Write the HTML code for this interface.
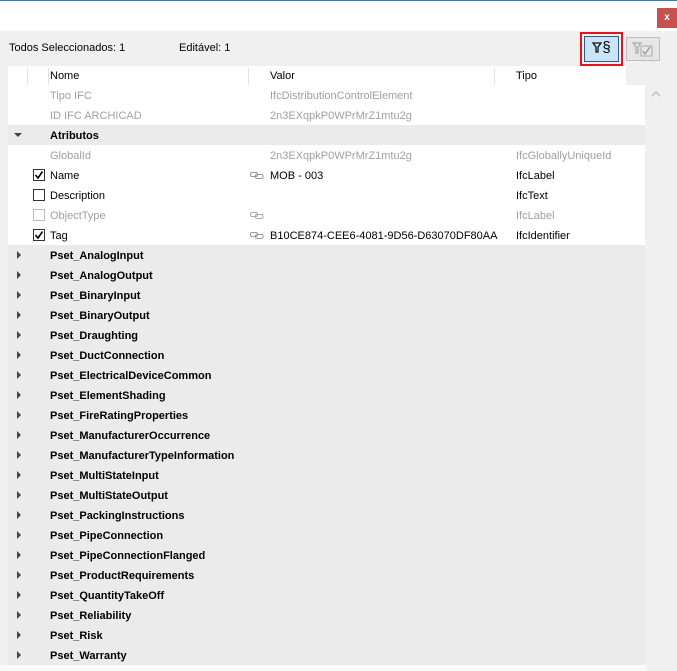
<!DOCTYPE html>
<html><head><meta charset="utf-8"><style>
*{margin:0;padding:0;box-sizing:border-box}
body{width:677px;height:671px;background:#f0f0f0;font-family:"Liberation Sans",sans-serif;font-size:11px;color:#000;position:relative;overflow:hidden}
.a{position:absolute;white-space:nowrap}
.row{position:absolute;left:8px;width:637px;height:20px}
.row span{position:absolute;top:5px;white-space:nowrap}
.g{color:#a0a0a0}
.b{font-weight:bold}
.cb{position:absolute;left:25px;top:4px;width:12px;height:12px;border:1px solid #333;background:#fff}
.cb.d{border-color:#bbb}
.tri{position:absolute;left:9px;top:6px;width:0;height:0}
.r{border-top:4px solid transparent;border-bottom:4px solid transparent;border-left:4px solid #444}
.dn{border-left:4px solid transparent;border-right:4px solid transparent;border-top:4px solid #444;top:8px;left:6px}
.lk{position:absolute;left:242px;top:7px}
</style></head><body>
<div class="a" style="left:0;top:0;width:677px;height:31px;background:#fff;border-top:1px solid #2b7cd3"></div>
<div class="a" style="left:657px;top:8px;width:20px;height:20px;background:#c75050;color:#fff;font-size:10px;font-weight:bold;text-align:center;line-height:19px">x</div>
<div class="a" style="left:9px;top:42px">Todos Seleccionados: 1</div>
<div class="a" style="left:179px;top:42px">Editável: 1</div>
<div class="a" style="left:580px;top:32px;width:43px;height:34px;border:2px solid #e8141a"></div>
<div class="a" style="left:584px;top:36px;width:35px;height:26px;background:#cce4f7;border:1px solid #2a5c8c;font-size:15px;line-height:22px;text-align:center">
<svg width="10" height="11" viewBox="0 0 10 11" style="vertical-align:-1px"><path d="M1 1h8L6 5v5H4V5z" fill="none" stroke="#111" stroke-width="1.3"/></svg>§</div>
<div class="a" style="left:626px;top:37px;width:34px;height:24px;border:1px solid #bdbdbd;background:#e6e6e6">
<svg width="32" height="22" viewBox="0 0 32 22"><path d="M6 5h8L11 9v6H9V9z" fill="none" stroke="#aaa" stroke-width="1.2"/><rect x="14" y="8" width="11" height="10" fill="none" stroke="#aaa"/><path d="M16 13l2 3 5-7" fill="none" stroke="#999" stroke-width="1.3"/></svg></div>
<div class="a" style="left:8px;top:66px;width:618px;height:19px;background:#fff"></div>
<div class="a" style="left:27px;top:68px;width:1px;height:17px;background:#e3e3e3"></div>
<div class="a" style="left:48px;top:68px;width:1px;height:17px;background:#e3e3e3"></div>
<div class="a" style="left:248px;top:68px;width:1px;height:17px;background:#e3e3e3"></div>
<div class="a" style="left:494px;top:68px;width:1px;height:17px;background:#e3e3e3"></div>
<div class="a" style="left:50px;top:70px">Nome</div>
<div class="a" style="left:270px;top:70px">Valor</div>
<div class="a" style="left:516px;top:70px">Tipo</div>
<svg class="a" style="left:651px;top:90px" width="10" height="7" viewBox="0 0 10 7"><path d="M1 6l4-4 4 4" fill="none" stroke="#c0c0c0" stroke-width="1.5"/></svg>
<div class="row" style="top:85px;background:#fff"><span class="g" style="left:42px">Tipo IFC</span><span class="g" style="left:262px">IfcDistributionControlElement</span></div>
<div class="row" style="top:105px;background:#fff"><span class="g" style="left:42px">ID IFC ARCHICAD</span><span class="g" style="left:262px">2n3EXqpkP0WPrMrZ1mtu2g</span></div>
<div class="row b" style="top:125px;background:#ebebeb"><div class="tri dn"></div><span style="left:42px">Atributos</span></div>
<div class="row" style="top:145px;background:#fff"><span class="g" style="left:42px">GlobalId</span><span class="g" style="left:262px">2n3EXqpkP0WPrMrZ1mtu2g</span><span class="g" style="left:508px">IfcGloballyUniqueId</span></div>
<div class="row" style="top:165px;background:#fff"><div class="cb"><svg width="10" height="10" viewBox="0 0 10 10"><path d="M1.5 5l2.5 3 4.5-6.5" fill="none" stroke="#000" stroke-width="1.6"/></svg></div><span style="left:42px">Name</span><svg class="lk" width="14" height="7" viewBox="0 0 14 7"><rect x="0.5" y="0.5" width="7" height="4" rx="1.5" fill="none" stroke="#999"/><rect x="5.5" y="2.5" width="7.5" height="4" rx="1.5" fill="none" stroke="#999"/></svg><span style="left:262px">MOB - 003</span><span style="left:508px">IfcLabel</span></div>
<div class="row" style="top:185px;background:#fff"><div class="cb"></div><span style="left:42px">Description</span><span style="left:508px">IfcText</span></div>
<div class="row" style="top:205px;background:#fff"><div class="cb d"></div><span class="g" style="left:42px">ObjectType</span><svg class="lk" width="14" height="7" viewBox="0 0 14 7"><rect x="0.5" y="0.5" width="7" height="4" rx="1.5" fill="none" stroke="#aaa"/><rect x="5.5" y="2.5" width="7.5" height="4" rx="1.5" fill="none" stroke="#aaa"/></svg><span class="g" style="left:508px">IfcLabel</span></div>
<div class="row" style="top:225px;background:#fff"><div class="cb"><svg width="10" height="10" viewBox="0 0 10 10"><path d="M1.5 5l2.5 3 4.5-6.5" fill="none" stroke="#000" stroke-width="1.6"/></svg></div><span style="left:42px">Tag</span><svg class="lk" width="14" height="7" viewBox="0 0 14 7"><rect x="0.5" y="0.5" width="7" height="4" rx="1.5" fill="none" stroke="#999"/><rect x="5.5" y="2.5" width="7.5" height="4" rx="1.5" fill="none" stroke="#999"/></svg><span style="left:262px">B10CE874-CEE6-4081-9D56-D63070DF80AA</span><span style="left:508px">IfcIdentifier</span></div>
<div class="a" style="left:8px;top:245px;width:637px;height:420px;background:#ebebeb"></div>
<div class="a" style="left:0;top:665px;width:646px;height:6px;background:#fafafa"></div>
<div class="row b" style="top:245px"><div class="tri r"></div><span style="left:42px">Pset_AnalogInput</span></div>
<div class="row b" style="top:265px"><div class="tri r"></div><span style="left:42px">Pset_AnalogOutput</span></div>
<div class="row b" style="top:285px"><div class="tri r"></div><span style="left:42px">Pset_BinaryInput</span></div>
<div class="row b" style="top:305px"><div class="tri r"></div><span style="left:42px">Pset_BinaryOutput</span></div>
<div class="row b" style="top:325px"><div class="tri r"></div><span style="left:42px">Pset_Draughting</span></div>
<div class="row b" style="top:345px"><div class="tri r"></div><span style="left:42px">Pset_DuctConnection</span></div>
<div class="row b" style="top:365px"><div class="tri r"></div><span style="left:42px">Pset_ElectricalDeviceCommon</span></div>
<div class="row b" style="top:385px"><div class="tri r"></div><span style="left:42px">Pset_ElementShading</span></div>
<div class="row b" style="top:405px"><div class="tri r"></div><span style="left:42px">Pset_FireRatingProperties</span></div>
<div class="row b" style="top:425px"><div class="tri r"></div><span style="left:42px">Pset_ManufacturerOccurrence</span></div>
<div class="row b" style="top:445px"><div class="tri r"></div><span style="left:42px">Pset_ManufacturerTypeInformation</span></div>
<div class="row b" style="top:465px"><div class="tri r"></div><span style="left:42px">Pset_MultiStateInput</span></div>
<div class="row b" style="top:485px"><div class="tri r"></div><span style="left:42px">Pset_MultiStateOutput</span></div>
<div class="row b" style="top:505px"><div class="tri r"></div><span style="left:42px">Pset_PackingInstructions</span></div>
<div class="row b" style="top:525px"><div class="tri r"></div><span style="left:42px">Pset_PipeConnection</span></div>
<div class="row b" style="top:545px"><div class="tri r"></div><span style="left:42px">Pset_PipeConnectionFlanged</span></div>
<div class="row b" style="top:565px"><div class="tri r"></div><span style="left:42px">Pset_ProductRequirements</span></div>
<div class="row b" style="top:585px"><div class="tri r"></div><span style="left:42px">Pset_QuantityTakeOff</span></div>
<div class="row b" style="top:605px"><div class="tri r"></div><span style="left:42px">Pset_Reliability</span></div>
<div class="row b" style="top:625px"><div class="tri r"></div><span style="left:42px">Pset_Risk</span></div>
<div class="row b" style="top:645px"><div class="tri r"></div><span style="left:42px">Pset_Warranty</span></div>
</body></html>
